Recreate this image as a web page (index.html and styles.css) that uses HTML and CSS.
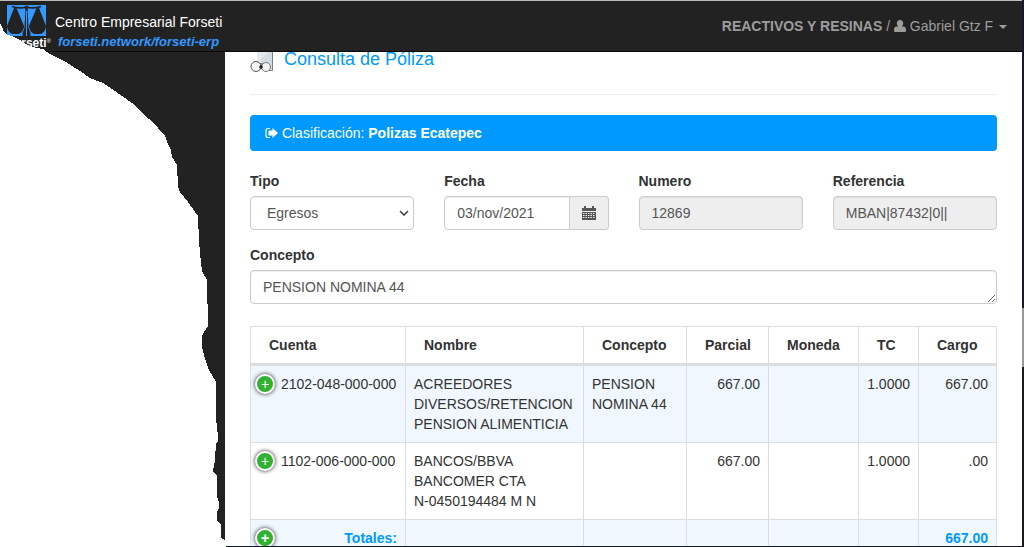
FILE: index.html
```html
<!DOCTYPE html>
<html lang="es">
<head>
<meta charset="utf-8">
<title>Consulta de Póliza</title>
<link rel="stylesheet" href="styles.css">
</head>
<body>
<header class="navbar">
  <a class="brand" href="#">
    <span class="brand-mark">
      <svg class="scales" viewBox="0 0 39 31" aria-hidden="true">
        <rect width="39" height="31" fill="#3399ff"/>
        <path d="M5 1.500Q12 4 19.500 2Q27 4 34 1.500" fill="none" stroke="#222" stroke-width="1.600"/>
        <circle cx="19.500" cy="2.500" r="2" fill="#222"/>
        <path d="M18.500 3h2l1 20 2 5v3h-8v-3l2-5z" fill="#222"/>
        <path d="M19.500 6v25" stroke="#3399ff" stroke-width="1"/>
        <path d="M7 3L9.500 3L17 21Q17 26 12 29H5Q0 26 0 21zM29.500 3H32L39 21Q39 26 34 29H27Q22 26 22 21z" fill="#222"/>
      </svg>
      <span class="brand-word">forseti<sup>®</sup></span>
    </span>
    <span class="brand-text">
      <span class="brand-name">Centro Empresarial Forseti</span>
      <span class="brand-url">forseti.network/forseti-erp</span>
    </span>
  </a>
  <button class="user" type="button">
    <strong>REACTIVOS Y RESINAS</strong> /
    <svg class="user-icon" viewBox="0 0 12 12" aria-hidden="true"><path d="M6 0C8 0 9.200 1.400 9.200 3.300C9.200 4.700 8.600 5.800 7.900 6.400H9.500Q12 6.800 12 10V10.800Q12 12 10.800 12H1.200Q0 12 0 10.800V10Q0 6.800 2.500 6.400H4.100C3.400 5.800 2.800 4.700 2.800 3.300C2.800 1.400 4 0 6 0z" fill="currentColor"/></svg>
    Gabriel Gtz F <span class="caret"></span>
  </button>
</header>
<div class="layout">
  <aside class="sidebar"></aside>
  <main class="content">
    <h1 class="title">
      <svg class="title-icon" viewBox="0 0 24 27" aria-hidden="true">
        <path d="M7 0h15v24H7z" fill="#e3e9ee"/>
        <path d="M11 13L22 3v20H11z" fill="#d3dce3"/>
        <path d="M22.500 0v24.500H17" fill="none" stroke="#74808a"/>
        <path d="M8 17h8v6H8z" fill="#888"/>
        <circle cx="6" cy="20.500" r="5" fill="#f4f4f4" stroke="#555"/>
        <circle cx="16" cy="21" r="4.500" fill="#f4f4f4" stroke="#777"/>
        <circle cx="11" cy="21" r="1.800" fill="#222"/>
      </svg>
      Consulta de Póliza
    </h1>
    <div class="banner">
      <svg class="banner-icon" viewBox="0 0 13 12" aria-hidden="true"><path d="M5 1.500H3Q1 1.500 1 3.500v5q0 2 2 2h2" fill="none" stroke="#fff" stroke-width="1.200"/><path d="M3.500 3.500H7.500V1L13 6 7.500 11V8.500H3.500z" fill="#fff"/></svg>
      Clasificación: <strong>Polizas Ecatepec</strong>
    </div>
    <form class="form">
      <div class="field">
        <label for="tipo">Tipo</label>
        <div class="select-wrap">
          <select id="tipo" class="control"><option>Egresos</option></select>
          <svg class="chevron" viewBox="0 0 10 6" aria-hidden="true"><path d="M1 1l4 4 4-4" fill="none" stroke="#444" stroke-width="1.600"/></svg>
        </div>
      </div>
      <div class="field">
        <label for="fecha">Fecha</label>
        <div class="group">
          <input id="fecha" class="control" type="text" value="03/nov/2021">
          <button class="addon" type="button" aria-label="Calendario">
            <svg class="calendar" viewBox="0 0 14 14" aria-hidden="true"><path d="M0 2h2V0h2v2h6V0h2v2h2v3H0z" fill="#555"/><path d="M0 6h14v8H0z" fill="#555"/><path d="M1 7.500h12M1 9.500h12M1 11.500h12" stroke="#eee" stroke-width="1" stroke-dasharray="1.500 1"/></svg>
          </button>
        </div>
      </div>
      <div class="field">
        <label for="numero">Numero</label>
        <input id="numero" class="control" type="text" value="12869" readonly>
      </div>
      <div class="field">
        <label for="referencia">Referencia</label>
        <input id="referencia" class="control" type="text" value="MBAN|87432|0||" readonly>
      </div>
      <div class="field wide">
        <label for="concepto">Concepto</label>
        <textarea id="concepto" class="control" rows="1">PENSION NOMINA 44</textarea>
      </div>
    </form>
    <table class="entries">
      <colgroup><col class="c-account"><col class="c-name"><col class="c-concept"><col class="c-partial"><col class="c-currency"><col class="c-rate"><col class="c-debit"></colgroup>
      <thead>
        <tr><th>Cuenta</th><th>Nombre</th><th>Concepto</th><th>Parcial</th><th>Moneda</th><th>TC</th><th>Cargo</th></tr>
      </thead>
      <tbody>
        <tr><td class="account"><button class="expand" type="button">+</button>2102-048-000-000</td><td>ACREEDORES DIVERSOS/RETENCION PENSION ALIMENTICIA</td><td>PENSION NOMINA 44</td><td class="num">667.00</td><td></td><td class="num">1.0000</td><td class="num">667.00</td></tr>
        <tr><td class="account"><button class="expand" type="button">+</button>1102-006-000-000</td><td>BANCOS/BBVA BANCOMER CTA<br>N-0450194484 M N</td><td></td><td class="num">667.00</td><td></td><td class="num">1.0000</td><td class="num">.00</td></tr>
        <tr class="totals"><td class="account num"><button class="expand" type="button">+</button>Totales:</td><td></td><td></td><td></td><td></td><td></td><td class="num">667.00</td></tr>
      </tbody>
    </table>
  </main>
</div>
<svg class="torn" width="226" height="547" viewBox="0 0 226 547" aria-hidden="true">
  <path fill="#fff" shape-rendering="crispEdges" d="M0 23L2 27L4 32L8 35L14 37L20 40L24 43L30 46L36 48L43 49L50 54L60 59L66 62L72 66L80 71L90 78L103 83L112 89L122 96L132 103L142 113L149 119L158 128L165 136L168 144L171 150L172 157L177 165L178 186L180 192L188 202L198 216L199 241L201 263L202 271L207 280L208 326L204 332L202 336L202 347L205 359L209 370L216 382L216 418L218 436L218 441L216 443L215 460L213 471L217 476L217 497L219 502L219 508L217 512L217 521L221 524L221 538L225 540V547H0z"/>
</svg>
<div class="edge-right"></div>
<div class="edge-bottom"></div>
</body>
</html>
```

FILE: styles.css
```css
* { box-sizing: border-box; }
html, body { height: 100%; }
body {
  margin: 0;
  overflow: hidden;
  background: #fff;
  color: #333;
  font: 14px/20px "Liberation Sans", Arial, sans-serif;
}
button, input, select, textarea { font: inherit; }

.navbar {
  position: fixed;
  inset: 0 0 auto;
  z-index: 2;
  height: 52px;
  display: flex;
  align-items: center;
  justify-content: space-between;
  padding: 0 17px 0 7px;
  background: #222;
  border-top: 1px solid #bbb;
  border-bottom: 1px solid #080808;
}
.brand {
  display: flex;
  gap: 4px;
  text-decoration: none;
  white-space: nowrap;
}
.brand-mark { width: 44px; display: flex; flex-direction: column; padding-top: 3px; }
.scales { width: 39px; height: 31px; }
.brand-word {
  align-self: flex-end;
  color: #fff;
  font-size: 12px;
  font-weight: bold;
  line-height: 15px;
}
.brand-word sup { font-size: 6px; line-height: 1px; vertical-align: 4px; font-weight: normal; }
.brand-text { display: flex; flex-direction: column; padding-top: 8px; }
.brand-name { color: #fff; font-size: 14px; line-height: 24px; }
.brand-url { color: #3399ff; font-size: 13px; line-height: 16px; font-weight: bold; font-style: italic; padding-left: 3px; }
.user { border: 0; padding: 0; background: none; color: #9d9d9d; }
.user-icon { width: 12px; height: 12px; vertical-align: -1px; }
.caret {
  display: inline-block;
  margin-left: 2px;
  vertical-align: middle;
  border-top: 4px solid;
  border-left: 4px solid transparent;
  border-right: 4px solid transparent;
}

.layout { display: flex; height: 100%; }
.sidebar { flex: 0 0 225px; background: #222; }
.content { flex: 1; min-width: 0; padding: 46px 27px 0 25px; }
.title {
  display: flex;
  gap: 10px;
  margin: 0 0 20px;
  padding-bottom: 21px;
  border-bottom: 1px solid #eee;
  color: #0099ff;
  font-size: 18px;
  line-height: 27px;
  font-weight: normal;
}
.title-icon { width: 24px; height: 27px; }
.banner {
  padding: 8px 15px;
  border-radius: 4px;
  background: #0099ff;
  color: #fff;
}
.banner-icon { width: 13px; height: 12px; vertical-align: -1px; }

.form {
  display: grid;
  grid-template-columns: repeat(4, minmax(0, 1fr));
  gap: 15px 30px;
  margin: 20px 0 22px;
}
.wide { grid-column: 1 / -1; }
.field label { display: block; margin-bottom: 5px; font-weight: bold; }
.control {
  display: block;
  width: 100%;
  height: 34px;
  padding: 6px 12px;
  border: 1px solid #ccc;
  border-radius: 4px;
  background: #fff;
  color: #555;
  box-shadow: inset 0 1px 1px rgba(0, 0, 0, .075);
}
.control[readonly] { background: #eee; }
select.control { appearance: none; padding-left: 16px; }
.select-wrap { position: relative; }
.chevron { position: absolute; right: 5px; top: 14px; width: 10px; height: 6px; pointer-events: none; }
.group { display: flex; }
.group .control { flex: 1; min-width: 0; border-radius: 4px 0 0 4px; }
.addon {
  width: 39px;
  padding: 0;
  border: 1px solid #ccc;
  border-left: 0;
  border-radius: 0 4px 4px 0;
  background: #eee;
}
.calendar { width: 14px; height: 14px; vertical-align: -2px; }

.entries { width: 100%; table-layout: fixed; border-collapse: collapse; }
.c-account { width: 155px; }
.c-name { width: 178px; }
.c-concept { width: 103px; }
.c-partial { width: 82px; }
.c-currency { width: 90px; }
.c-rate { width: 60px; }
.c-debit { width: 78px; }
.entries th, .entries td { border: 1px solid #ddd; padding: 8px; vertical-align: top; }
.entries th { padding: 8px 18px; border-bottom-width: 3px; text-align: left; }
.entries tbody tr:nth-child(odd) { background: #f0f7fe; }
.entries .num { text-align: right; }
.entries .account { position: relative; padding-left: 30px; }
.totals { font-weight: bold; }
.totals td { color: #0099ff; }
.expand {
  position: absolute;
  left: 4px;
  top: 8px;
  width: 20px;
  height: 20px;
  padding: 0;
  border: 2px solid #fff;
  border-radius: 50%;
  background: #31b131;
  box-shadow: 0 0 4px #222;
  color: #fff;
  line-height: 14px;
}

.torn { position: fixed; left: 0; top: 0; z-index: 3; }
.edge-right { position: fixed; inset: 0 0 0 auto; z-index: 3; width: 2px; background: linear-gradient(#1d162b 308px, #999 308px 367px, #1a1a1a 367px); }
.edge-bottom { position: fixed; inset: auto 0 0 226px; z-index: 3; height: 1px; background: #141a2b; }
```
